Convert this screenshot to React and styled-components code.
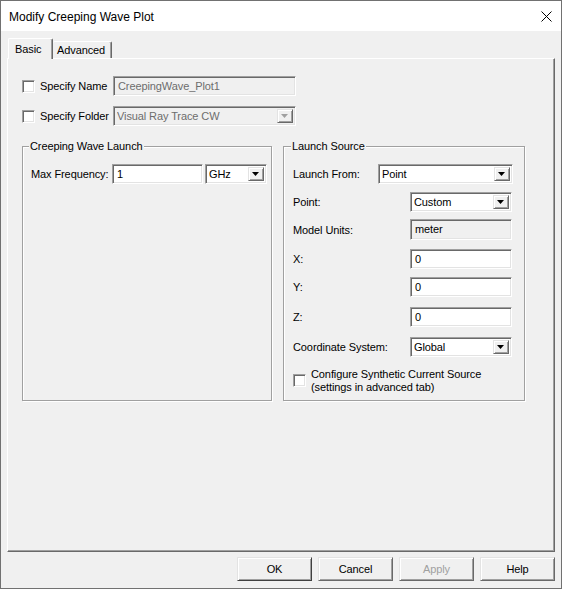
import React from "react";
import styled, { createGlobalStyle, css } from "styled-components";

const GlobalStyle = createGlobalStyle`
  html, body { margin: 0; padding: 0; background: #f0f0f0; }
  body { font-family: "Liberation Sans", Arial, sans-serif; font-size: 11px; letter-spacing: -0.1px; color: #000; }
  * { box-sizing: border-box; }
`;

const sunken = css`
  border: 1px solid;
  border-color: #a0a0a0 #ffffff #ffffff #a0a0a0;
  box-shadow: inset 1px 1px 0 #696969, inset -1px -1px 0 #e3e3e3;
`;

const raised = css`
  border: 1px solid;
  border-color: #e3e3e3 #696969 #696969 #e3e3e3;
  box-shadow: inset 1px 1px 0 #ffffff, inset -1px -1px 0 #a0a0a0;
`;

const Window = styled.div`
  width: 562px;
  height: 589px;
  border: 1px solid #717171;
  background: #f0f0f0;
  display: flex;
  flex-direction: column;
  overflow: hidden;
`;

const TitleBar = styled.div`
  height: 30px;
  flex: none;
  background: #ffffff;
  display: flex;
  align-items: center;
  padding-left: 8px;
  padding-right: 9px;
`;

const Title = styled.div`
  flex: 1;
  font-size: 12px;
  letter-spacing: 0;
  line-height: 14px;
  color: #000;
  padding-top: 1px;
`;

const CloseGlyph = styled.svg`
  width: 11px;
  height: 11px;
  display: block;
  margin-top: 1px;
`;

const Body = styled.div`
  flex: 1;
  display: flex;
  flex-direction: column;
  padding: 7px 6px 0 6px;
`;

const TabStrip = styled.div`
  display: flex;
  align-items: flex-end;
  height: 20px;
  padding-left: 1px;
  position: relative;
  z-index: 2;
`;

const Tab = styled.div`
  background: #f0f0f0;
  border-top: 1px solid #ffffff;
  border-left: 1px solid #ffffff;
  border-right: 1px solid #696969;
  box-shadow: inset -1px 0 0 #a0a0a0;
  border-radius: 2px 2px 0 0;
  display: flex;
  align-items: center;
  ${(p) =>
    p.$active
      ? css`
          height: 21px;
          margin-bottom: -1px;
          padding: 0 0 1px 6px;
          width: 45px;
        `
      : css`
          height: 17px;
          padding: 0 0 0 4px;
          width: 59px;
          border-left: none;
        `}
`;

const TabPanel = styled.div`
  height: 494px;
  width: 548px;
  flex: none;
  border: 1px solid;
  border-color: #ffffff #696969 #696969 #ffffff;
  box-shadow: inset -1px -1px 0 #a0a0a0;
  padding: 17px 0 0 14px;
  display: flex;
  flex-direction: column;
`;

const OptionRow = styled.div`
  display: grid;
  grid-template-columns: 91px 183px;
  align-items: center;
  height: 20px;
  margin-top: ${(p) => p.$mt || 0}px;
`;

const CheckLabel = styled.div`
  display: flex;
  align-items: center;
  gap: 5px;
`;

const CheckBox = styled.div`
  width: 13px;
  height: 13px;
  flex: none;
  background: #ffffff;
  ${sunken}
  margin-top: ${(p) => p.$mt || 0}px;
`;

const FieldBox = styled.div`
  ${sunken}
  height: ${(p) => p.$h || 20}px;
  width: ${(p) => p.$w}px;
  background: ${(p) => (p.$disabled || p.$readonly ? "#f0f0f0" : "#ffffff")};
  color: ${(p) => (p.$disabled ? "#6d6d6d" : "#000")};
  padding: ${(p) => (p.$top ? "3px 4px 0" : "0 4px")};
  display: flex;
  align-items: ${(p) => (p.$top ? "flex-start" : "center")};
  white-space: nowrap;
  overflow: hidden;
  flex: none;
`;

const ComboBox = styled.div`
  ${sunken}
  height: ${(p) => p.$h || 20}px;
  width: ${(p) => p.$w}px;
  background: ${(p) => (p.$disabled ? "#f0f0f0" : "#ffffff")};
  color: ${(p) => (p.$disabled ? "#6d6d6d" : "#000")};
  padding: 2px 2px 2px 3px;
  display: flex;
  align-items: center;
  flex: none;
`;

const ComboText = styled.div`
  flex: 1;
  white-space: nowrap;
  overflow: hidden;
`;

const DropButton = styled.div`
  width: 16px;
  align-self: stretch;
  background: #f0f0f0;
  ${raised}
  display: flex;
  align-items: center;
  justify-content: center;
`;

const ArrowGlyph = styled.svg`
  width: 7px;
  height: 4px;
  display: block;
  margin-left: -1px;
`;

const GroupRow = styled.div`
  display: flex;
  gap: 11px;
  margin-top: 14px;
  height: 261px;
`;

const Group = styled.fieldset`
  margin: 0;
  min-width: 0;
  width: ${(p) => p.$w}px;
  border: 1px solid #a0a0a0;
  box-shadow: 1px 1px 0 #ffffff, inset 1px 1px 0 #ffffff;
  padding: 11px 0 0 ${(p) => p.$pl}px;
  display: flex;
  flex-direction: column;
`;

const Legend = styled.legend`
  padding: 0 1px;
  margin-left: -2px;
  line-height: 13px;
  font-size: 11px;
  background: #f0f0f0;
`;

const FormRow = styled.div`
  display: flex;
  align-items: ${(p) => (p.$start ? "flex-start" : "center")};
  margin-top: ${(p) => p.$mt || 0}px;
  min-height: ${(p) => p.$h || 20}px;
`;

const FieldLabel = styled.div`
  width: ${(p) => p.$w}px;
  flex: none;
  white-space: nowrap;
`;

const Spacer = styled.div`
  width: ${(p) => p.$w}px;
  flex: none;
`;

const MultiLine = styled.div`
  line-height: 13px;
  margin-left: 5px;
`;

const ButtonBar = styled.div`
  display: flex;
  justify-content: flex-end;
  gap: 6px;
  margin-top: 5px;
`;

const PushButton = styled.div`
  width: 75px;
  height: 24px;
  background: #f0f0f0;
  ${raised}
  ${(p) =>
    p.$default &&
    css`
      border-color: #e3e3e3 #404040 #404040 #e3e3e3;
    `}
  color: ${(p) => (p.$disabled ? "#a0a0a0" : "#000")};
  display: flex;
  align-items: center;
  justify-content: center;
`;

function Arrow({ disabled }) {
  return (
    <ArrowGlyph viewBox="0 0 7 4">
      <polygon points="0,0 7,0 3.5,4" fill={disabled ? "#a0a0a0" : "#000"} />
    </ArrowGlyph>
  );
}

function Combo({ w, h, disabled, children }) {
  return (
    <ComboBox $w={w} $h={h} $disabled={disabled}>
      <ComboText>{children}</ComboText>
      <DropButton>
        <Arrow disabled={disabled} />
      </DropButton>
    </ComboBox>
  );
}

export default function App() {
  return (
    <>
      <GlobalStyle />
      <Window>
        <TitleBar>
          <Title>Modify Creeping Wave Plot</Title>
          <CloseGlyph viewBox="0 0 11 11">
            <path d="M0.5 0.5 L10.5 10.5 M10.5 0.5 L0.5 10.5" stroke="#000" strokeWidth="1" />
          </CloseGlyph>
        </TitleBar>
        <Body>
          <TabStrip>
            <Tab $active>Basic</Tab>
            <Tab>Advanced</Tab>
          </TabStrip>
          <TabPanel>
            <OptionRow>
              <CheckLabel>
                <CheckBox />
                <span>Specify Name</span>
              </CheckLabel>
              <FieldBox $w={183} $disabled>CreepingWave_Plot1</FieldBox>
            </OptionRow>
            <OptionRow $mt={10}>
              <CheckLabel>
                <CheckBox />
                <span>Specify Folder</span>
              </CheckLabel>
              <Combo w={183} disabled>Visual Ray Trace CW</Combo>
            </OptionRow>

            <GroupRow>
              <Group $w={250} $pl={8}>
                <Legend>Creeping Wave Launch</Legend>
                <FormRow>
                  <FieldLabel $w={81}>Max Frequency:</FieldLabel>
                  <FieldBox $w={91}>1</FieldBox>
                  <Spacer $w={2} />
                  <Combo w={62}>GHz</Combo>
                </FormRow>
              </Group>
              <Group $w={242} $pl={9}>
                <Legend>Launch Source</Legend>
                <FormRow>
                  <FieldLabel $w={85}>Launch From:</FieldLabel>
                  <Combo w={135}>Point</Combo>
                </FormRow>
                <FormRow $mt={8}>
                  <FieldLabel $w={117}>Point:</FieldLabel>
                  <Combo w={102}>Custom</Combo>
                </FormRow>
                <FormRow $mt={7} $h={21}>
                  <FieldLabel $w={117}>Model Units:</FieldLabel>
                  <FieldBox $w={102} $h={21} $top $readonly>
                    meter
                  </FieldBox>
                </FormRow>
                <FormRow $mt={9}>
                  <FieldLabel $w={117}>X:</FieldLabel>
                  <FieldBox $w={102}>0</FieldBox>
                </FormRow>
                <FormRow $mt={8}>
                  <FieldLabel $w={117}>Y:</FieldLabel>
                  <FieldBox $w={102}>0</FieldBox>
                </FormRow>
                <FormRow $mt={10}>
                  <FieldLabel $w={117}>Z:</FieldLabel>
                  <FieldBox $w={102}>0</FieldBox>
                </FormRow>
                <FormRow $mt={10}>
                  <FieldLabel $w={117}>Coordinate System:</FieldLabel>
                  <Combo w={102}>Global</Combo>
                </FormRow>
                <FormRow $mt={11} $start>
                  <CheckBox $mt={6} />
                  <MultiLine>
                    Configure Synthetic Current Source
                    <br />
                    (settings in advanced tab)
                  </MultiLine>
                </FormRow>
              </Group>
            </GroupRow>
          </TabPanel>
          <ButtonBar>
            <PushButton $default>OK</PushButton>
            <PushButton>Cancel</PushButton>
            <PushButton $disabled>Apply</PushButton>
            <PushButton>Help</PushButton>
          </ButtonBar>
        </Body>
      </Window>
    </>
  );
}
